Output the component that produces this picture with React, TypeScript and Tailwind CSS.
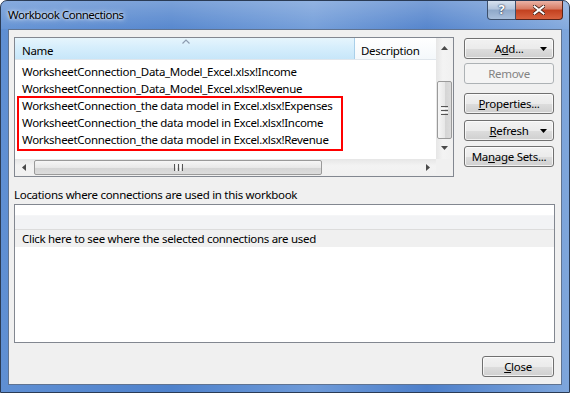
import React from "react";

const font = { fontFamily: '"Noto Sans", "Segoe UI", sans-serif' };

function TriUp({ color = "#555" }: { color?: string }) {
  return (
    <svg width="7" height="4" viewBox="0 0 7 4">
      <path d="M0 4 L3.5 0 L7 4 Z" fill={color} />
    </svg>
  );
}
function TriDown({ color = "#555" }: { color?: string }) {
  return (
    <svg width="7" height="4" viewBox="0 0 7 4">
      <path d="M0 0 L7 0 L3.5 4 Z" fill={color} />
    </svg>
  );
}
function TriLeft({ color = "#555" }: { color?: string }) {
  return (
    <svg width="4" height="7" viewBox="0 0 4 7">
      <path d="M4 0 L4 7 L0 3.5 Z" fill={color} />
    </svg>
  );
}
function TriRight({ color = "#555" }: { color?: string }) {
  return (
    <svg width="4" height="7" viewBox="0 0 4 7">
      <path d="M0 0 L4 3.5 L0 7 Z" fill={color} />
    </svg>
  );
}

function Btn({
  children,
  disabled,
  dropdown,
  className = "",
}: {
  children: React.ReactNode;
  disabled?: boolean;
  dropdown?: boolean;
  className?: string;
}) {
  return (
    <div
      className={
        "relative h-[21px] flex items-center justify-center rounded-[3px] border " +
        (disabled
          ? "border-[#adb2b5] bg-[#f4f4f4] text-[#838383] "
          : "border-[#707070] bg-[linear-gradient(to_bottom,#f2f2f2_0%,#ebebeb_50%,#dddddd_51%,#cfcfcf_100%)] text-black shadow-[inset_0_0_0_1px_rgba(255,255,255,0.7)] ") +
        className
      }
    >
      <span className="leading-none">{children}</span>
      {dropdown && (
        <span className="absolute right-[6px] top-[8px] flex">
          <TriDown color="#000" />
        </span>
      )}
    </div>
  );
}

const rows = [
  "WorksheetConnection_Data_Model_Excel.xlsx!Income",
  "WorksheetConnection_Data_Model_Excel.xlsx!Revenue",
  "WorksheetConnection_the data model in Excel.xlsx!Expenses",
  "WorksheetConnection_the data model in Excel.xlsx!Income",
  "WorksheetConnection_the data model in Excel.xlsx!Revenue",
];

export default function App() {
  return (
    <div
      style={font}
      className="w-[570px] h-[393px] flex flex-col rounded-t-[7px] border border-[#2a3b55] bg-[linear-gradient(to_right,#5f8fd3_0%,#4f82cc_30%,#6e9ad8_55%,#4d7fca_75%,#7ea6dc_100%)] overflow-hidden text-[11.5px] tracking-[-0.3px]"
    >
      {/* Title bar */}
      <div className="h-[28px] flex items-start justify-between pl-[7px] pr-[6px] bg-[linear-gradient(to_bottom,rgba(255,255,255,0.25),rgba(255,255,255,0.05))]">
        <div className="mt-[5px] tracking-[-0.5px] text-black [text-shadow:0_0_6px_rgba(255,255,255,0.95),0_0_3px_rgba(255,255,255,0.9)]">
          Workbook Connections
        </div>
        <div className="flex h-[19px] tracking-normal">
          <div className="w-[29px] h-[19px] rounded-bl-[4px] border border-[#3c4f6b] border-t-0 bg-[linear-gradient(to_bottom,#d7e2ef_0%,#b2c4dc_45%,#8fa8c9_50%,#a9bfdc_100%)] flex items-center justify-center text-white font-bold text-[13px] [text-shadow:0_0_2px_#203050,0_0_1px_#203050]">
            ?
          </div>
          <div className="w-[47px] h-[19px] rounded-br-[4px] border border-l-0 border-t-0 border-[#5a2419] bg-[linear-gradient(to_bottom,#eab3a6_0%,#d67a62_45%,#c2401f_50%,#d8623f_100%)] flex items-center justify-center">
            <svg width="12" height="10" viewBox="0 0 12 10">
              <path d="M1 1 L11 9 M11 1 L1 9" stroke="#3a1a12" strokeWidth="3.4" strokeLinecap="square" />
              <path d="M1.5 1.5 L10.5 8.5 M10.5 1.5 L1.5 8.5" stroke="#fff" strokeWidth="2" strokeLinecap="square" />
            </svg>
          </div>
        </div>
      </div>

      {/* Client area */}
      <div className="flex-1 mx-[7px] mb-[7px] border border-[#5f7391] bg-[#f0f0f0] flex flex-col pl-[5px] pt-[7px]">
        <div className="flex">
          {/* Connections list */}
          <div className="w-[440px] h-[140px] border border-[#828790] bg-white flex">
            <div className="flex-1 flex flex-col">
              {/* header */}
              <div className="h-[22px] flex border-b border-[#e0e6ec]">
                <div className="relative w-[340px] border-r border-[#a9cfe9] bg-[linear-gradient(to_bottom,#e6f5fd_0%,#d6eefc_45%,#c7e6f9_100%)] flex items-center pl-[7px] pt-[4px]">
                  Name
                  <span className="absolute left-[167px] top-[1px] flex">
                    <svg width="8" height="5" viewBox="0 0 8 5">
                      <path d="M0.5 4.5 L4 1 L7.5 4.5" stroke="#8d9cb0" strokeWidth="1.2" fill="none" />
                    </svg>
                  </span>
                </div>
                <div className="flex-1 bg-[linear-gradient(to_bottom,#ffffff,#f4f8fb)] flex items-center pl-[6px] pt-[4px]">
                  Description
                </div>
              </div>
              {/* rows */}
              <div className="relative flex-1 pt-[3px]">
                {rows.map((r) => (
                  <div key={r} className="h-[17px] flex items-center pl-[7px] whitespace-nowrap">
                    {r}
                  </div>
                ))}
                <div className="absolute left-[2px] top-[36px] w-[326px] h-[55px] border-2 border-[#ff0000]" />
              </div>
              {/* h scroll */}
              <div className="h-[17px] flex items-center bg-[linear-gradient(to_bottom,#e6e6e6,#f3f3f3_40%,#f0f0f0)]">
                <div className="w-[17px] h-[17px] flex items-center justify-center">
                  <TriLeft color="#4a4a4a" />
                </div>
                <div className="ml-[2px] w-[288px] h-[15px] rounded-[2px] border border-[#9a9a9a] bg-[linear-gradient(to_bottom,#f6f6f6_0%,#e8e8e8_50%,#d4d4d4_51%,#dcdcdc_100%)] flex items-center justify-center">
                  <div className="flex gap-[1px]">
                    <div className="w-[1px] h-[7px] bg-[#555]" />
                    <div className="w-[1px] h-[7px] bg-[#f8f8f8]" />
                    <div className="w-[1px] h-[7px] bg-[#555]" />
                    <div className="w-[1px] h-[7px] bg-[#f8f8f8]" />
                    <div className="w-[1px] h-[7px] bg-[#555]" />
                  </div>
                </div>
                <div className="flex-1" />
                <div className="w-[17px] h-[17px] flex items-center justify-center">
                  <TriRight color="#4a4a4a" />
                </div>
              </div>
            </div>
            {/* v scroll */}
            <div className="w-[17px] flex flex-col">
              <div className="flex-1 flex flex-col bg-[linear-gradient(to_right,#e6e6e6,#f3f3f3_40%,#f0f0f0)]">
                <div className="h-[17px] flex items-center justify-center pt-[3px]">
                  <TriUp color="#4a4a4a" />
                </div>
                <div className="mt-[26px] ml-[1px] w-[15px] h-[58px] rounded-[2px] border border-[#9a9a9a] bg-[linear-gradient(to_right,#f6f6f6_0%,#e8e8e8_50%,#d4d4d4_51%,#dcdcdc_100%)] flex items-center justify-center">
                  <div className="flex flex-col gap-[1px]">
                    <div className="w-[7px] h-[1px] bg-[#555]" />
                    <div className="w-[7px] h-[1px] bg-[#f8f8f8]" />
                    <div className="w-[7px] h-[1px] bg-[#555]" />
                    <div className="w-[7px] h-[1px] bg-[#f8f8f8]" />
                    <div className="w-[7px] h-[1px] bg-[#555]" />
                  </div>
                </div>
                <div className="flex-1" />
                <div className="h-[17px] flex items-center justify-center pb-[5px]">
                  <TriDown color="#4a4a4a" />
                </div>
              </div>
              <div className="h-[17px] bg-[#f0f0f0]" />
            </div>
          </div>

          {/* Buttons */}
          <div className="ml-[10px] mt-[1px] w-[90px] flex flex-col">
            <Btn dropdown>
              A<span className="underline">d</span>d...
            </Btn>
            <Btn disabled className="mt-[4px]">Remove</Btn>
            <Btn className="mt-[9px]">
              <span className="underline">P</span>roperties...
            </Btn>
            <Btn dropdown className="mt-[6px]">
              <span className="underline">R</span>efresh
            </Btn>
            <Btn className="mt-[5px]">
              Ma<span className="underline">n</span>age Sets...
            </Btn>
          </div>
        </div>

        <div className="mt-[10px] h-[16px] flex items-center">
          Locations where connections are used in this workbook
        </div>

        <div className="mt-[1px] w-[541px] h-[139px] border border-[#828790] bg-white flex flex-col">
          <div className="h-[25px] border-b border-[#dcdcdc] bg-[linear-gradient(to_bottom,#ffffff_0%,#ffffff_40%,#f2f3f5_45%,#f2f3f5_100%)]" />
          <div className="h-[17px] bg-[#f0f0f0] flex items-center pl-[7px]">
            Click here to see where the selected connections are used
          </div>
        </div>

        <div className="mt-[13px] self-end mr-[7px]">
          <Btn className="w-[72px]">
            <span className="underline">C</span>lose
          </Btn>
        </div>
      </div>
    </div>
  );
}
